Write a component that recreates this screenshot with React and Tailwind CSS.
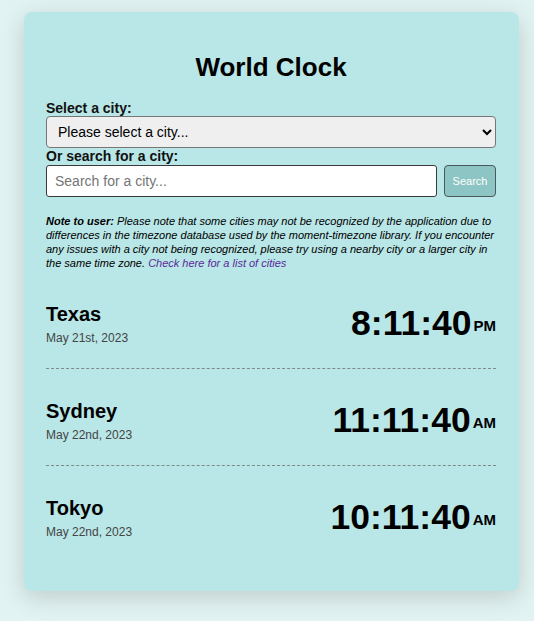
import { useState } from 'react';

const CITIES = [
  { name: 'Texas', date: 'May 21st, 2023', time: '8:11:40', period: 'PM' },
  { name: 'Sydney', date: 'May 22nd, 2023', time: '11:11:40', period: 'AM' },
  { name: 'Tokyo', date: 'May 22nd, 2023', time: '10:11:40', period: 'AM' },
];

export default function App() {
  const [query, setQuery] = useState('');
  const [city, setCity] = useState('');

  return (
    <main className="min-h-screen bg-[#e1f3f2] pt-[12px] pb-[29px] font-['Liberation_Sans',Arial,sans-serif] text-[#111]">
      <div className="ml-[24px] w-[495px] rounded-[8px] bg-[#b9e6e6] pl-[22px] pr-[23px] pt-[40px] pb-[29px] shadow-[0_6px_24px_rgba(0,0,0,0.16)]">
        <h1 className="text-center text-[26px] font-bold leading-[30px] text-black">World Clock</h1>

        <label className="mt-[18px] block text-[14px] font-bold leading-[16px]">Select a city:</label>
        <select value={city} onChange={e => setCity(e.target.value)}
          className="block h-[32px] w-full rounded-[4px] border border-[#767676] bg-[#efefef] pl-[7px] text-[14px] text-black">
          <option value="">Please select a city...</option>
          <option value="texas">Texas</option>
          <option value="sydney">Sydney</option>
          <option value="tokyo">Tokyo</option>
        </select>

        <label className="block text-[14px] font-bold leading-[17px]">Or search for a city:</label>
        <div className="flex gap-[7px]">
          <input value={query} onChange={e => setQuery(e.target.value)}
            className="h-[32px] flex-1 rounded-[3px] border border-[#3a3a3a] bg-white pl-[8px] text-[14px] text-black placeholder:text-[#757575] focus:outline-none"
            placeholder="Search for a city..." />
          <button className="h-[32px] w-[52px] rounded-[4px] border border-[#4a5a5a] bg-[#8cc5c3] text-[11px] text-white">
            Search
          </button>
        </div>

        <p className="mt-[17px] mb-[2px] text-[11px] italic leading-[14px] text-black">
          <span className="font-bold">Note to user:</span> Please note that some cities may not be recognized by the application due to differences in the timezone database used by the moment-timezone library. If you encounter any issues with a city not being recognized, please try using a nearby city or a larger city in the same time zone.{' '}
          <a href="#" className="text-[#5a2a9a]">Check here for a list of cities</a>
        </p>

        {CITIES.map((c, i) => (
          <div key={c.name}
            className={`flex items-center justify-between pt-[31px] pb-[22px] ${i < CITIES.length - 1 ? 'border-b border-dashed border-[#7f8a8a]' : ''}`}>
            <div>
              <div className="text-[20px] font-bold leading-[23px] text-black">{c.name}</div>
              <div className="mt-[5px] text-[12px] leading-[15px] text-[#444]">{c.date}</div>
            </div>
            <div className="text-[35.5px] font-bold leading-[39px] text-black">
              {c.time}
              <span className="ml-[2px] align-[4px] text-[15px]">{c.period}</span>
            </div>
          </div>
        ))}
      </div>
    </main>
  );
}
